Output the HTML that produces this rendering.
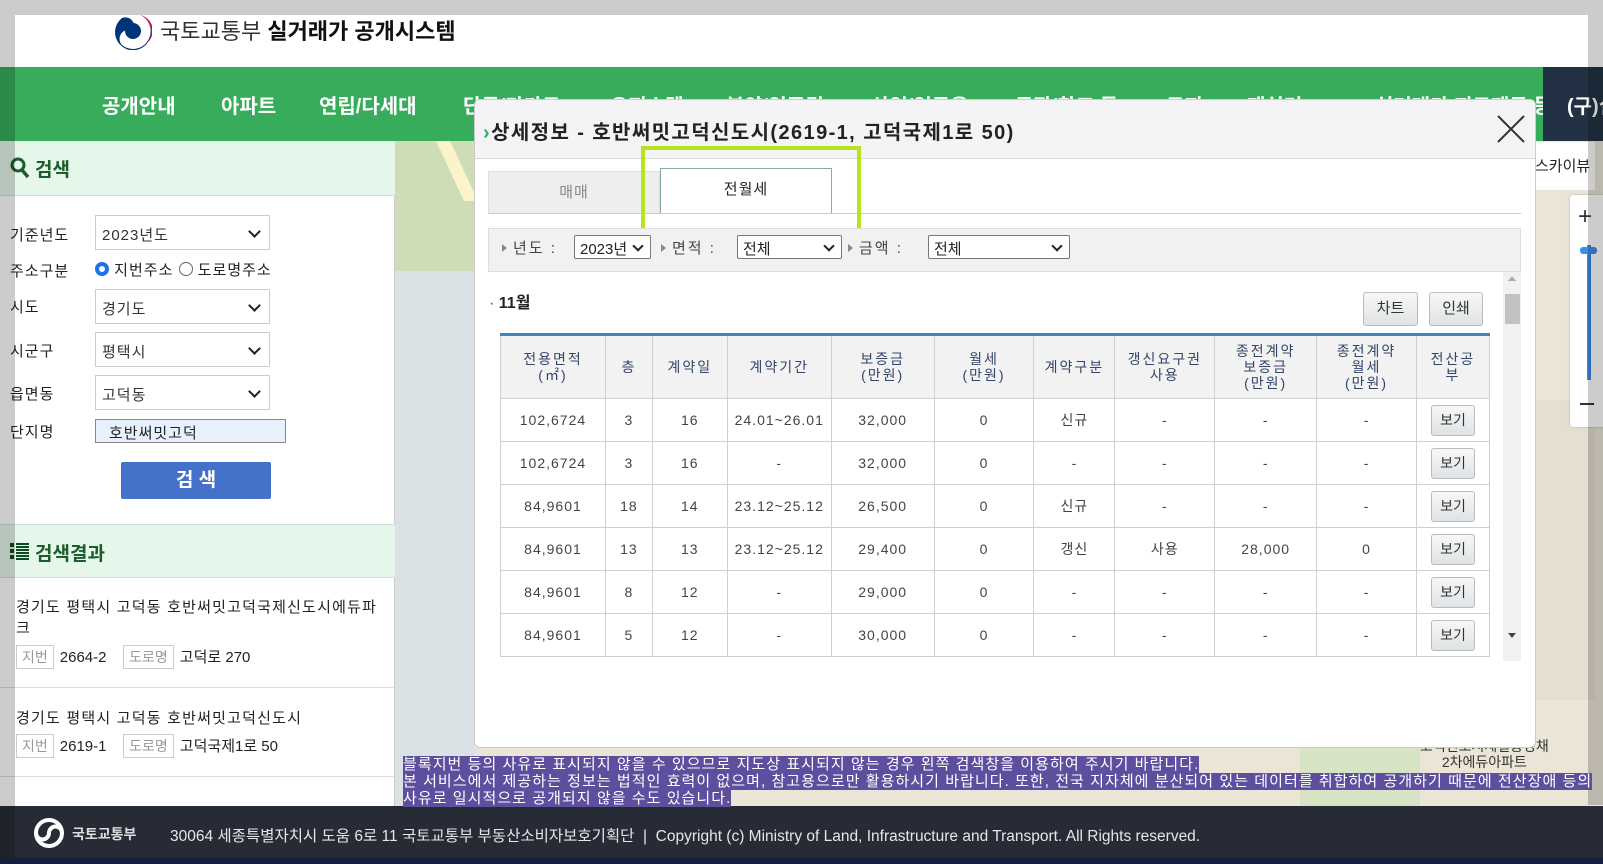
<!DOCTYPE html>
<html><head><meta charset="utf-8">
<style>
*{margin:0;padding:0;box-sizing:border-box}
body{width:1603px;height:864px;overflow:hidden;position:relative;background:#fff;font-family:"Liberation Sans","Noto Sans CJK KR",sans-serif;color:#222}
.abs{position:absolute}
.nav span{position:absolute;top:23px;color:#fff;font-size:20px;font-weight:bold;white-space:nowrap}
.lbl{position:absolute;left:10px;font-size:15px;color:#222;letter-spacing:1px}
.sel{position:absolute;left:95px;width:175px;height:35px;border:1px solid #ccc;background:#fff;font-size:15px;padding:8px 6px;color:#333;letter-spacing:1px}
.sel:after,.fs:after{content:"";position:absolute;right:10px;top:11px;width:7px;height:7px;border-right:2px solid #222;border-bottom:2px solid #222;transform:rotate(45deg)}
.tag{display:inline-block;border:1px solid #ccc;color:#999;font-size:14px;padding:1px 5px;margin-right:6px}
table{border-collapse:collapse;font-family:"Liberation Sans","Noto Sans CJK KR",sans-serif}
td,th{border:1px solid #cfcfcf;text-align:center;font-size:14px}
th{background:#f2f2f2;color:#33456a;font-weight:normal;line-height:16px;letter-spacing:2px}
td{height:43px;color:#444;letter-spacing:1px}
.bt{display:inline-block;width:44px;height:31px;line-height:29px;border:1px solid #bbb;border-radius:3px;background:linear-gradient(#f7f7f7,#dfe3e5);color:#333;font-size:14px;letter-spacing:0}
.fs{position:absolute;top:6px;height:24px;border:1px solid #777;background:#fff;font-size:15px;padding:2px 5px;border-radius:2px}
.fs:after{top:6px;right:8px;width:6px;height:6px}
.fl{position:absolute;top:8px;font-size:15px;color:#444;letter-spacing:2px}
.fl:before{content:"";display:inline-block;border-left:5px solid #888;border-top:4px solid transparent;border-bottom:4px solid transparent;margin-right:6px;vertical-align:1px}
.note span{background:#5d4f9e;color:#fff}
</style></head><body>

<!-- header -->
<div class="abs" style="left:0;top:0;width:1603px;height:67px;background:#fff"></div>
<svg class="abs" style="left:114px;top:12px" width="38" height="38" viewBox="0 0 38 38">
<circle cx="19" cy="19" r="18" fill="#fff"/>
<path d="M8 6A18 18 0 1 0 30 6A14 14 0 0 1 8 33A9 9 0 0 1 19 19A9 9 0 0 0 8 6z" fill="#003478"/>
<path d="M19 19A9 9 0 0 1 8 33A14 14 0 0 0 30 6A16 16 0 0 1 19 19z" fill="#fff"/>
<path d="M26 3A18 18 0 0 1 33 31A16 16 0 0 0 26 3z" fill="#c8102e"/>
<circle cx="19" cy="19" r="8" fill="#003478"/>
</svg>
<div class="abs" style="left:160px;top:14px;font-size:22px;color:#333;white-space:nowrap">국토교통부 <b style="color:#111">실거래가 공개시스템</b></div>

<div class="abs nav" style="left:0;top:67px;width:1603px;height:74px;background:#37ad5b">
<span style="left:102px">공개안내</span><span style="left:221px">아파트</span><span style="left:319px">연립/다세대</span><span style="left:463px">단독/다가구</span><span style="left:610px">오피스텔</span><span style="left:726px">분양/입주권</span><span style="left:871px">상업/업무용</span><span style="left:1015px">공장/창고 등</span><span style="left:1166px">토지</span><span style="left:1247px">재실터</span><span style="left:1375px">실거래가 지도제공 등</span>
<div style="position:absolute;left:1543px;top:0;width:60px;height:74px;background:#223244"><span style="left:24px;top:23px">(구)실</span></div>
</div>

<!-- map -->
<div class="abs" style="left:395px;top:141px;width:1208px;height:665px;background:#ebe5d7"></div>
<div class="abs" style="left:395px;top:141px;width:80px;height:130px;background:#cfdcb8"></div>
<div class="abs" style="left:395px;top:271px;width:80px;height:535px;background:#dbe2e5"></div>
<div class="abs" style="left:450px;top:141px;width:14px;height:60px;background:#fbf4c8;transform:skewX(25deg)"></div>
<div class="abs" style="left:1535px;top:400px;width:60px;height:300px;background:#e4dfd0"></div>
<div class="abs" style="left:1300px;top:748px;width:120px;height:58px;background:#d6e3c4"></div>
<div class="abs" style="left:1535px;top:142px;width:60px;height:48px;background:#fff;font-size:15px;padding-top:13px;white-space:nowrap">스카이뷰</div>
<div class="abs" style="left:1570px;top:195px;width:36px;height:232px;background:#fff;border-radius:3px;box-shadow:0 0 2px #aaa">
<div style="position:absolute;left:8px;top:8px;font-size:24px;color:#333">+</div>
<div style="position:absolute;left:17px;top:50px;width:4px;height:135px;background:#3a8ee6"></div>
<div style="position:absolute;left:10px;top:52px;width:17px;height:7px;background:#3a8ee6;border-radius:3px"></div>
<div style="position:absolute;left:10px;top:208px;width:14px;height:2px;background:#333"></div>
</div>
<div class="abs" style="left:1420px;top:738px;font-size:14px;color:#333;text-align:center;line-height:16px">고덕신도시제일풍경채<br>2차에듀아파트</div>

<!-- left panel -->
<div class="abs" style="left:0;top:141px;width:395px;height:665px;background:#fff;border-right:1px solid #ccc"></div>
<div class="abs" style="left:0;top:141px;width:395px;height:55px;background:#e5f6ea;border-bottom:1px solid #cfe0d4"></div>
<svg class="abs" style="left:10px;top:157px" width="20" height="22" viewBox="0 0 20 22"><circle cx="8" cy="8" r="6" stroke="#1b5e2b" stroke-width="3" fill="none"/><path d="M12 13l6 7" stroke="#1b5e2b" stroke-width="3.5"/></svg>
<div class="abs" style="left:35px;top:155px;font-size:19px;font-weight:bold;color:#1b5e2b">검색</div>
<div class="lbl" style="top:224px">기준년도</div><div class="sel" style="top:215px">2023년도</div>
<div class="lbl" style="top:260px">주소구분</div>
<div class="abs" style="left:95px;top:259px;font-size:15px;white-space:nowrap;letter-spacing:1px"><span style="display:inline-block;width:14px;height:14px;border-radius:50%;border:4px solid #1a73e8;vertical-align:-1px"></span> 지번주소 <span style="display:inline-block;width:14px;height:14px;border-radius:50%;border:1px solid #666;vertical-align:-1px"></span> 도로명주소</div>
<div class="lbl" style="top:296px">시도</div><div class="sel" style="top:289px">경기도</div>
<div class="lbl" style="top:340px">시군구</div><div class="sel" style="top:332px">평택시</div>
<div class="lbl" style="top:383px">읍면동</div><div class="sel" style="top:375px">고덕동</div>
<div class="lbl" style="top:421px">단지명</div>
<div class="abs" style="left:95px;top:419px;width:191px;height:24px;border:1px solid #888;background:#e8f0fd;font-size:15px;padding:2px 13px;letter-spacing:1px">호반써밋고덕</div>
<div class="abs" style="left:121px;top:462px;width:150px;height:37px;background:#4472ca;border-radius:2px;color:#fff;font-weight:bold;font-size:19px;text-align:center;line-height:37px">검 색</div>

<div class="abs" style="left:0;top:524px;width:395px;height:54px;background:#e5f6ea;border-top:1px solid #cfe0d4;border-bottom:1px solid #cfe0d4"></div>
<div class="abs" style="left:10px;top:543px;width:4px;height:4px;background:#0b4d20;box-shadow:0 6px #0b4d20,0 12px #0b4d20"></div>
<div class="abs" style="left:16px;top:543px;width:13px;height:2px;background:#0b4d20;box-shadow:0 3px #0b4d20,0 6px #0b4d20,0 9px #0b4d20,0 12px #0b4d20,0 15px #0b4d20"></div>
<div class="abs" style="left:35px;top:539px;font-size:19px;font-weight:bold;color:#1b5e2b">검색결과</div>
<div class="abs" style="left:16px;top:597px;width:370px;font-size:15px;line-height:21px;letter-spacing:1.2px">경기도 평택시 고덕동 호반써밋고덕국제신도시에듀파크</div>
<div class="abs" style="left:16px;top:645px;font-size:15px;white-space:nowrap"><span class="tag">지번</span>2664-2 &nbsp;&nbsp;&nbsp;<span class="tag">도로명</span>고덕로 270</div>
<div class="abs" style="left:0;top:687px;width:395px;height:1px;background:#ddd"></div>
<div class="abs" style="left:16px;top:707px;font-size:15px;letter-spacing:1.2px">경기도 평택시 고덕동 호반써밋고덕신도시</div>
<div class="abs" style="left:16px;top:734px;font-size:15px;white-space:nowrap"><span class="tag">지번</span>2619-1 &nbsp;&nbsp;&nbsp;<span class="tag">도로명</span>고덕국제1로 50</div>
<div class="abs" style="left:0;top:776px;width:395px;height:1px;background:#ddd"></div>

<!-- modal -->
<div class="abs" style="left:474px;top:99px;width:1062px;height:649px;background:#fff;border:1px solid #ccc;border-radius:6px;overflow:hidden">
<div style="position:absolute;left:0;top:0;width:100%;height:59px;background:#f4f4f6;border-bottom:1px solid #d8d8d8"></div>
<div style="position:absolute;left:8px;top:16px;font-size:20px;font-weight:bold;color:#222;white-space:nowrap;letter-spacing:1.4px"><span style="color:#37ad5b">›</span>상세정보 - 호반써밋고덕신도시(2619-1, 고덕국제1로 50)</div>
<svg style="position:absolute;left:1022px;top:15px" width="28" height="28"><path d="M1 1L27 27M27 1L1 27" stroke="#333" stroke-width="2"/></svg>
<!-- tabs -->
<div style="position:absolute;left:13px;top:71px;width:172px;height:43px;background:#eee;border:1px solid #ddd;color:#888;font-size:15px;text-align:center;line-height:42px;letter-spacing:1px">매매</div>
<div style="position:absolute;left:185px;top:68px;width:172px;height:46px;background:#fff;border:1px solid #8aa;border-bottom:none;font-size:15px;text-align:center;line-height:42px;letter-spacing:1px">전월세</div>
<div style="position:absolute;left:13px;top:113px;width:1033px;height:1px;background:#ccc"></div>
<div style="position:absolute;left:166px;top:46px;width:220px;height:86px;border:4px solid #b5e61d"></div>
<!-- filter -->
<div style="position:absolute;left:13px;top:128px;width:1033px;height:44px;background:#f1f1f1;border:1px solid #ddd">
<span class="fl" style="left:13px">년도 :</span><div class="fs" style="left:85px;width:77px">2023년</div>
<span class="fl" style="left:172px">면적 :</span><div class="fs" style="left:248px;width:105px">전체</div>
<span class="fl" style="left:359px">금액 :</span><div class="fs" style="left:439px;width:142px">전체</div>
</div>
<!-- scroll -->
<div style="position:absolute;left:1028px;top:172px;width:18px;height:389px;background:#f1f1f1"></div>
<div style="position:absolute;left:1033px;top:176px;border-left:4px solid transparent;border-right:4px solid transparent;border-bottom:5px solid #aaa"></div>
<div style="position:absolute;left:1030px;top:194px;width:15px;height:30px;background:#c1c1c1"></div>
<div style="position:absolute;left:1033px;top:533px;border-left:4px solid transparent;border-right:4px solid transparent;border-top:5px solid #444"></div>
<div style="position:absolute;left:14px;top:189px;font-size:16px;font-weight:bold"><span style="font-weight:normal;color:#555">·</span> 11월</div>
<div class="bt" style="position:absolute;left:888px;top:192px;width:55px;height:34px;line-height:32px;font-size:15px;text-align:center">차트</div>
<div class="bt" style="position:absolute;left:954px;top:192px;width:54px;height:34px;line-height:32px;font-size:15px;text-align:center">인쇄</div>
<div style="position:absolute;left:25px;top:233px;width:990px;height:324px;overflow:hidden">
<table style="width:990px;border-top:3px solid #3d85bf">
<colgroup><col style="width:105px"><col style="width:47px"><col style="width:75px"><col style="width:104px"><col style="width:103px"><col style="width:100px"><col style="width:81px"><col style="width:100px"><col style="width:102px"><col style="width:100px"><col style="width:73px"></colgroup>
<tr style="height:64px"><th>전용면적<br>(㎡)</th><th>층</th><th>계약일</th><th>계약기간</th><th>보증금<br>(만원)</th><th>월세<br>(만원)</th><th>계약구분</th><th>갱신요구권<br>사용</th><th>종전계약<br>보증금<br>(만원)</th><th>종전계약<br>월세<br>(만원)</th><th>전산공<br>부</th></tr>
<tr><td>102,6724</td><td>3</td><td>16</td><td>24.01~26.01</td><td>32,000</td><td>0</td><td>신규</td><td>-</td><td>-</td><td>-</td><td><span class="bt">보기</span></td></tr>
<tr><td>102,6724</td><td>3</td><td>16</td><td>-</td><td>32,000</td><td>0</td><td>-</td><td>-</td><td>-</td><td>-</td><td><span class="bt">보기</span></td></tr>
<tr><td>84,9601</td><td>18</td><td>14</td><td>23.12~25.12</td><td>26,500</td><td>0</td><td>신규</td><td>-</td><td>-</td><td>-</td><td><span class="bt">보기</span></td></tr>
<tr><td>84,9601</td><td>13</td><td>13</td><td>23.12~25.12</td><td>29,400</td><td>0</td><td>갱신</td><td>사용</td><td>28,000</td><td>0</td><td><span class="bt">보기</span></td></tr>
<tr><td>84,9601</td><td>8</td><td>12</td><td>-</td><td>29,000</td><td>0</td><td>-</td><td>-</td><td>-</td><td>-</td><td><span class="bt">보기</span></td></tr>
<tr><td>84,9601</td><td>5</td><td>12</td><td>-</td><td>30,000</td><td>0</td><td>-</td><td>-</td><td>-</td><td>-</td><td><span class="bt">보기</span></td></tr>
<tr><td>84,9601</td><td>5</td><td>12</td><td>-</td><td>30,000</td><td>0</td><td>-</td><td>-</td><td>-</td><td>-</td><td><span class="bt">보기</span></td></tr>
</table></div>
</div>

<!-- notice -->
<div class="abs note" style="left:403px;top:756px;width:1200px;font-size:15px;line-height:17px;z-index:5;white-space:nowrap;letter-spacing:1.05px">
<span>블록지번 등의 사유로 표시되지 않을 수 있으므로 지도상 표시되지 않는 경우 왼쪽 검색창을 이용하여 주시기 바랍니다.</span><br>
<span>본 서비스에서 제공하는 정보는 법적인 효력이 없으며, 참고용으로만 활용하시기 바랍니다. 또한, 전국 지자체에 분산되어 있는 데이터를 취합하여 공개하기 때문에 전산장애 등의</span><br>
<span>사유로 일시적으로 공개되지 않을 수도 있습니다.</span>
</div>

<!-- footer -->
<div class="abs" style="left:0;top:806px;width:1603px;height:52px;background:#262b36"></div>
<div class="abs" style="left:0;top:858px;width:1603px;height:6px;background:#14213d"></div>
<svg class="abs" style="left:34px;top:818px" width="30" height="30" viewBox="0 0 30 30"><circle cx="15" cy="15" r="13" fill="none" stroke="#fff" stroke-width="4"/><path d="M2 15a6.5 6.5 0 0 0 13 0a6.5 6.5 0 0 1 13 0" stroke="#fff" stroke-width="4" fill="none"/></svg>
<div class="abs" style="left:72px;top:824px;font-size:14px;color:#ddd;font-weight:bold">국토교통부</div>
<div class="abs" style="left:170px;top:824px;font-size:15.5px;color:#e6e6e6;white-space:nowrap">30064 세종특별자치시 도움 6로 11 국토교통부 부동산소비자보호기획단 &nbsp;|&nbsp; Copyright (c) Ministry of Land, Infrastructure and Transport. All Rights reserved.</div>

<!-- frame overlay -->
<div class="abs" style="left:0;top:0;width:1603px;height:15px;background:rgba(0,0,0,0.2);z-index:9"></div>
<div class="abs" style="left:0;top:15px;width:15px;height:843px;background:rgba(0,0,0,0.2);z-index:9"></div>
<div class="abs" style="left:1588px;top:15px;width:15px;height:790px;background:rgba(0,0,0,0.2);z-index:4"></div>
</body></html>
